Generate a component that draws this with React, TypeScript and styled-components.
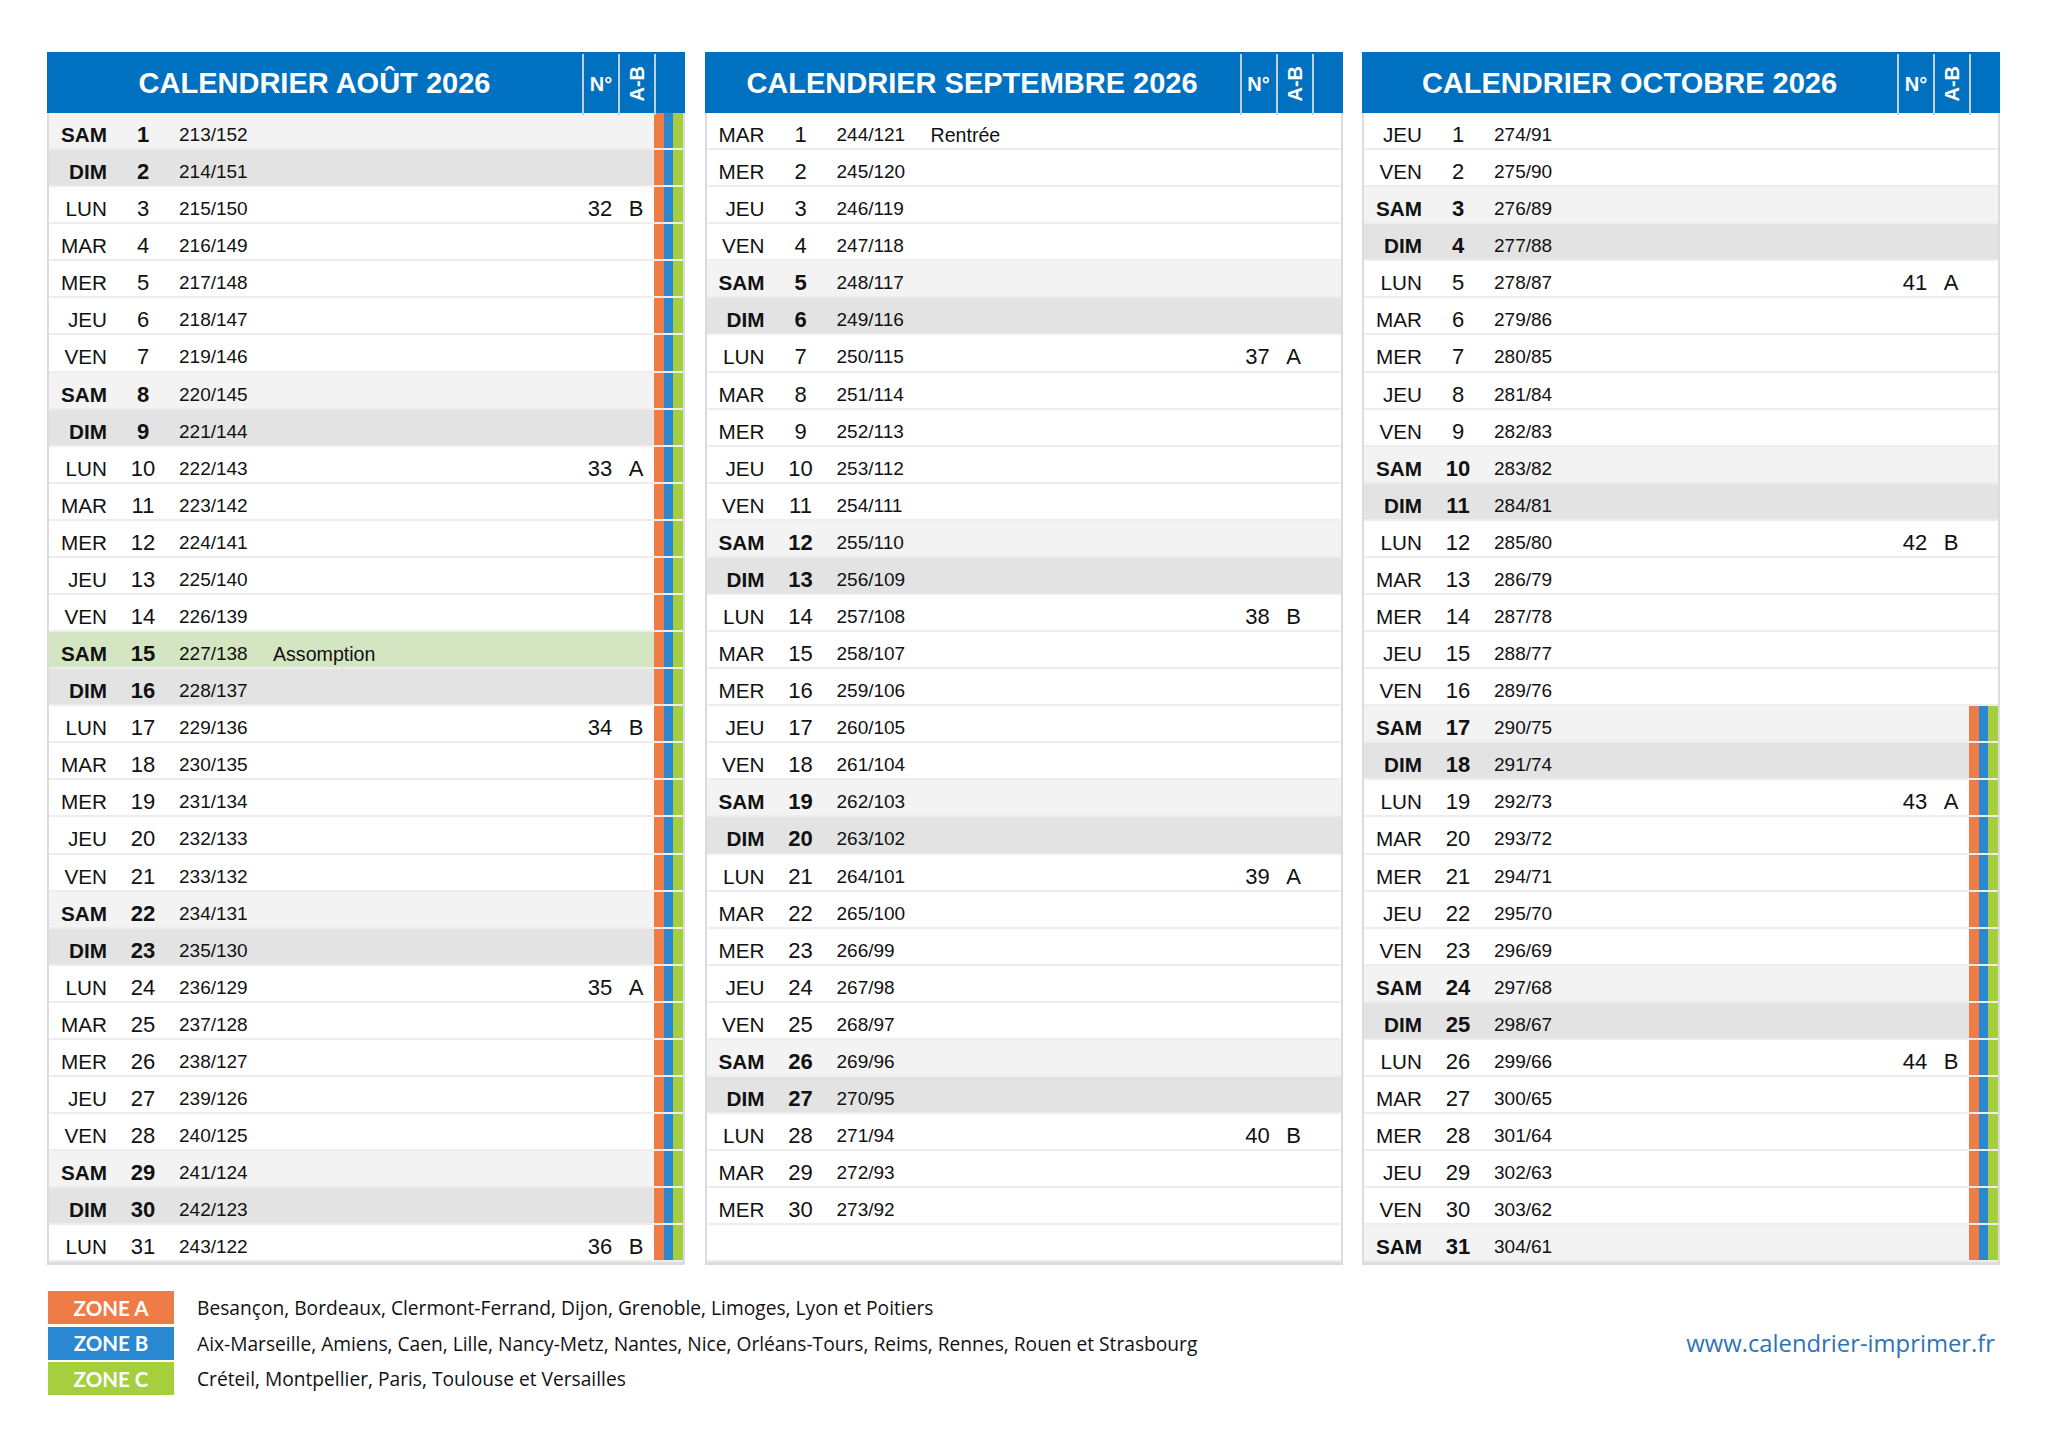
import React from "react";
import styled, { createGlobalStyle } from "styled-components";

const GlobalStyle = createGlobalStyle`
  html, body { margin: 0; padding: 0; background: #ffffff; }
  body { font-family: "Liberation Sans", Arial, sans-serif; color: #111111; }
`;

const ORANGE = "#ef7b46";
const BLUE = "#2a88d3";
const GREEN = "#a6cf3e";

type Kind = "week" | "sat" | "sun" | "holiday" | "empty";

type DayRow = {
  key: string;
  name: string;
  day: string;
  doy: string;
  holiday: string;
  week: string;
  ab: string;
  zones: boolean;
  kind: Kind;
  bold: boolean;
};

type Month = { title: string; rows: DayRow[] };

const NAMES = ["DIM", "LUN", "MAR", "MER", "JEU", "VEN", "SAM"];

const HOLIDAYS: Record<string, { label: string; off: boolean }> = {
  "7-15": { label: "Assomption", off: true },
  "8-1": { label: "Rentrée", off: false },
};

function isoWeek(d: Date): number {
  const t = new Date(Date.UTC(d.getFullYear(), d.getMonth(), d.getDate()));
  const dayNum = t.getUTCDay() || 7;
  t.setUTCDate(t.getUTCDate() + 4 - dayNum);
  const yearStart = new Date(Date.UTC(t.getUTCFullYear(), 0, 1));
  return Math.ceil(((t.getTime() - yearStart.getTime()) / 86400000 + 1) / 7);
}

function buildMonth(
  title: string,
  monthIndex: number,
  zoneFrom: number | null
): Month {
  const rows: DayRow[] = [];
  const daysInMonth = new Date(2026, monthIndex + 1, 0).getDate();
  const jan1 = new Date(2026, 0, 1).getTime();
  for (let d = 1; d <= 31; d++) {
    if (d > daysInMonth) {
      rows.push({
        key: `e${d}`,
        name: "",
        day: "",
        doy: "",
        holiday: "",
        week: "",
        ab: "",
        zones: false,
        kind: "empty",
        bold: false,
      });
      continue;
    }
    const date = new Date(2026, monthIndex, d);
    const wd = date.getDay();
    const doy = Math.round((date.getTime() - jan1) / 86400000) + 1;
    const hol = HOLIDAYS[`${monthIndex}-${d}`];
    const wk = wd === 1 ? isoWeek(date) : 0;
    let kind: Kind = "week";
    if (wd === 6) kind = "sat";
    if (wd === 0) kind = "sun";
    if (hol && hol.off) kind = "holiday";
    rows.push({
      key: `d${d}`,
      name: NAMES[wd],
      day: String(d),
      doy: `${doy}/${365 - doy}`,
      holiday: hol ? hol.label : "",
      week: wk ? String(wk) : "",
      ab: wk ? (wk % 2 === 1 ? "A" : "B") : "",
      zones: zoneFrom !== null && d >= zoneFrom,
      kind,
      bold: wd === 0 || wd === 6,
    });
  }
  return { title, rows };
}

const MONTHS: Month[] = [
  buildMonth("CALENDRIER AOÛT 2026", 7, 1),
  buildMonth("CALENDRIER SEPTEMBRE 2026", 8, null),
  buildMonth("CALENDRIER OCTOBRE 2026", 9, 17),
];

const ROW_BG: Record<Kind, string> = {
  week: "#ffffff",
  empty: "#ffffff",
  sat: "#f3f3f3",
  sun: "#e3e3e3",
  holiday: "#d3e6c1",
};

/* ---------- layout ---------- */

const Page = styled.main`
  width: 2048px;
  box-sizing: border-box;
  padding: 52px 48px 0 47px;
`;

const Calendars = styled.div`
  display: grid;
  grid-template-columns: repeat(3, 638px);
  column-gap: 19.5px;
`;

const Panel = styled.section`
  display: flex;
  flex-direction: column;
`;

const Header = styled.header`
  display: flex;
  height: 61px;
  background: #0070c0;
  color: #ffffff;
`;

const Title = styled.h2`
  margin: 0;
  padding-top: 2px;
  width: 535px;
  box-sizing: border-box;
  display: flex;
  align-items: center;
  justify-content: center;
  font-family: "Liberation Sans", Arial, sans-serif;
  font-size: 29px;
  font-weight: 700;
`;

const HeadCell = styled.div<{ $closed?: boolean }>`
  position: relative;
  z-index: 1;
  box-sizing: border-box;
  width: ${(p) => (p.$closed ? "38px" : "36px")};
  height: 61px;
  margin-top: 2px;
  border-left: 2px solid #c3cfda;
  border-right: ${(p) => (p.$closed ? "2px solid #c3cfda" : "none")};
  display: flex;
  align-items: center;
  justify-content: center;
  font-size: 20px;
  font-weight: 700;
`;

const Vertical = styled.span`
  writing-mode: vertical-rl;
  transform: rotate(180deg);
  line-height: 1;
  margin-top: -2px;
`;

const Body = styled.div`
  border: 2px solid #dcdcdc;
  border-top: none;
  border-bottom-width: 3px;
`;

const Row = styled.div<{ $kind: Kind }>`
  display: grid;
  grid-template-columns: 58px 72px 94px 1fr 36px 36px 29px;
  height: 37.08px;
  box-sizing: border-box;
  border-bottom: 2px solid #ededed;
  background: ${(p) => ROW_BG[p.$kind]};
  font-size: 19px;
`;

const Cell = styled.div<{
  $align: "left" | "center" | "right";
  $bold?: boolean;
  $size?: number;
}>`
  padding-top: 9px;
  line-height: 26px;
  text-align: ${(p) => p.$align};
  font-weight: ${(p) => (p.$bold ? 700 : 400)};
  font-size: ${(p) => (p.$size ? `${p.$size}px` : "inherit")};
  white-space: nowrap;
`;

const Stripes = styled.div`
  display: flex;
`;

const Stripe = styled.span<{ $color: string }>`
  flex: 1;
  background: ${(p) => p.$color};
`;

const Footer = styled.footer`
  display: flex;
  justify-content: space-between;
  align-items: center;
  margin-top: 26px;
  padding: 0 5px 0 1px;
`;

const Legend = styled.div`
  display: grid;
  grid-template-columns: 126px auto;
  column-gap: 23px;
  row-gap: 2.5px;
  align-items: center;
`;

const ZoneTag = styled.div<{ $color: string }>`
  height: 33px;
  background: ${(p) => p.$color};
  color: #ffffff;
  display: flex;
  align-items: center;
  justify-content: center;
  font-family: Lato, "Open Sans", sans-serif;
  font-size: 20.5px;
  font-weight: 700;
`;

const ZoneText = styled.div`
  font-family: "Open Sans", Lato, sans-serif;
  font-size: 19.2px;
  color: #111111;
`;

const Url = styled.div`
  font-family: "Open Sans", Lato, sans-serif;
  font-size: 23.8px;
  color: #2e74b5;
`;

const ZONES = [
  {
    label: "ZONE A",
    color: ORANGE,
    text: "Besançon, Bordeaux, Clermont-Ferrand, Dijon, Grenoble, Limoges, Lyon et Poitiers",
  },
  {
    label: "ZONE B",
    color: BLUE,
    text: "Aix-Marseille, Amiens, Caen, Lille, Nancy-Metz, Nantes, Nice, Orléans-Tours, Reims, Rennes, Rouen et Strasbourg",
  },
  {
    label: "ZONE C",
    color: GREEN,
    text: "Créteil, Montpellier, Paris, Toulouse et Versailles",
  },
];

function MonthPanel({ month }: { month: Month }) {
  return (
    <Panel>
      <Header>
        <Title>{month.title}</Title>
        <HeadCell>N°</HeadCell>
        <HeadCell $closed>
          <Vertical>A-B</Vertical>
        </HeadCell>
      </Header>
      <Body>
        {month.rows.map((r) => (
          <Row key={r.key} $kind={r.kind}>
            <Cell $align="right" $bold={r.bold} $size={20.7}>
              {r.name}
            </Cell>
            <Cell $align="center" $bold={r.bold} $size={22}>
              {r.day}
            </Cell>
            <Cell $align="left">{r.doy}</Cell>
            <Cell $align="left" $size={19.6}>
              {r.holiday}
            </Cell>
            <Cell $align="center" $size={22}>
              {r.week}
            </Cell>
            <Cell $align="center" $size={22}>
              {r.ab}
            </Cell>
            {r.zones ? (
              <Stripes>
                <Stripe $color={ORANGE} />
                <Stripe $color={BLUE} />
                <Stripe $color={GREEN} />
              </Stripes>
            ) : (
              <div />
            )}
          </Row>
        ))}
      </Body>
    </Panel>
  );
}

export default function App() {
  return (
    <>
      <GlobalStyle />
      <Page>
        <Calendars>
          {MONTHS.map((m) => (
            <MonthPanel key={m.title} month={m} />
          ))}
        </Calendars>
        <Footer>
          <Legend>
            {ZONES.map((z) => (
              <React.Fragment key={z.label}>
                <ZoneTag $color={z.color}>{z.label}</ZoneTag>
                <ZoneText>{z.text}</ZoneText>
              </React.Fragment>
            ))}
          </Legend>
          <Url>www.calendrier-imprimer.fr</Url>
        </Footer>
      </Page>
    </>
  );
}
